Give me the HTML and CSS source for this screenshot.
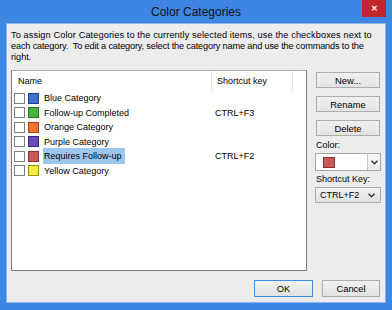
FILE: index.html
```html
<!DOCTYPE html>
<html lang="en">
<head>
    <meta charset="UTF-8">
    <title>Color Categories</title>
    <link rel="stylesheet" href="styles.css">
</head>
<body>
    <div class="window">
        <div class="titlebar">
            <span class="title">Color Categories</span>
            <div class="close">&#x2715;</div>
        </div>
        <div class="client">
            <p class="intro">
                <span class="line line-1">To assign Color Categories to the currently selected items, use the checkboxes next to</span>
                <span class="line line-2">each category.&nbsp; To edit a category, select the category name and use the commands to the</span>
                <span class="line">right.</span>
            </p>
            <div class="main">
                <div class="list">
                    <div class="list-head">
                        <div class="col-name">Name</div>
                        <div class="col-key">Shortcut key</div>
                        <div class="col-rest"></div>
                    </div>
                    <div class="row">
                        <div class="col-name"><span class="check"></span><span class="swatch" style="background:#3f6fd2;border-color:#243f8a"></span><span class="label">Blue Category</span></div>
                        <div class="col-key"></div>
                    </div>
                    <div class="row">
                        <div class="col-name"><span class="check"></span><span class="swatch" style="background:#4bb33f;border-color:#2a6e22"></span><span class="label">Follow-up Completed</span></div>
                        <div class="col-key">CTRL+F3</div>
                    </div>
                    <div class="row">
                        <div class="col-name"><span class="check"></span><span class="swatch" style="background:#ef7332;border-color:#9c4317"></span><span class="label">Orange Category</span></div>
                        <div class="col-key"></div>
                    </div>
                    <div class="row">
                        <div class="col-name"><span class="check"></span><span class="swatch" style="background:#6a4ab8;border-color:#3d2777"></span><span class="label">Purple Category</span></div>
                        <div class="col-key"></div>
                    </div>
                    <div class="row">
                        <div class="col-name"><span class="check"></span><span class="swatch" style="background:#c75a5a;border-color:#8a3030"></span><span class="label selected">Requires Follow-up</span></div>
                        <div class="col-key">CTRL+F2</div>
                    </div>
                    <div class="row">
                        <div class="col-name"><span class="check"></span><span class="swatch" style="background:#f5ec3a;border-color:#9a9010"></span><span class="label">Yellow Category</span></div>
                        <div class="col-key"></div>
                    </div>
                </div>
                <div class="side">
                    <button class="btn">New...</button>
                    <button class="btn">Rename</button>
                    <button class="btn">Delete</button>
                    <div class="field-label">Color:</div>
                    <div class="combo color-combo">
                        <span class="combo-value"><span class="color-box"></span></span>
                        <span class="combo-drop">
                            <svg width="7" height="5" viewBox="0 0 7 5"><polyline points="0.5,0.8 3.5,3.8 6.5,0.8" fill="none" stroke="#333" stroke-width="1.4"/></svg>
                        </span>
                    </div>
                    <div class="field-label">Shortcut Key:</div>
                    <div class="combo key-combo">
                        <span class="combo-value">CTRL+F2</span>
                        <svg width="7" height="5" viewBox="0 0 7 5"><polyline points="0.5,0.8 3.5,3.8 6.5,0.8" fill="none" stroke="#333" stroke-width="1.4"/></svg>
                    </div>
                </div>
            </div>
            <div class="footer">
                <button class="btn btn-ok">OK</button>
                <button class="btn btn-cancel">Cancel</button>
            </div>
        </div>
    </div>
</body>
</html>
```

FILE: styles.css
```css
body {
    margin: 0;
    font-family: "Liberation Sans", Arial, sans-serif;
    font-size: 9px;
    color: #000;
}
.window {
    width: 392px;
    height: 310px;
    box-sizing: border-box;
    background: #3d86e4;
    padding: 0 7px 8px 7px;
}
.titlebar {
    position: relative;
    height: 24px;
    display: flex;
    align-items: center;
    justify-content: center;
}
.title {
    font-size: 12px;
    color: #111;
}
.close {
    position: absolute;
    top: 0;
    right: -1px;
    width: 24px;
    height: 17px;
    background: #c1272d;
    color: #fff;
    font-size: 8px;
    font-weight: bold;
    display: flex;
    align-items: center;
    justify-content: center;
}
.client {
    height: 278px;
    box-sizing: border-box;
    background: #ececec;
    padding: 6px 5px 5px 4px;
    display: flex;
    flex-direction: column;
    box-shadow: 0 0 0 1px #8fb6ec;
}
.intro {
    margin: 0 -4px 7px 0;
    height: 33px;
    line-height: 11px;
    font-size: 9.2px;
}
.intro .line {
    display: block;
    white-space: nowrap;
}
.intro .line-1 {
    letter-spacing: 0.11px;
}
.intro .line-2 {
    letter-spacing: -0.17px;
}
.main {
    display: flex;
    gap: 9px;
    height: 201px;
}
.list {
    width: 296px;
    box-sizing: border-box;
    border: 1px solid #7d7d7d;
    border-top-color: #a8a8a8;
    background: #fff;
}
.list-head {
    display: flex;
    height: 20px;
    align-items: stretch;
}
.list-head > div {
    display: flex;
    align-items: center;
    border-right: 1px solid #e3e6ea;
}
.list-head .col-name {
    padding-left: 6px;
}
.list-head .col-key {
    padding-left: 5px;
}
.list-head .col-rest {
    flex: 1;
    border-right: none;
}
.col-name {
    width: 200px;
    box-sizing: border-box;
}
.col-key {
    width: 81px;
    box-sizing: border-box;
    padding-left: 3px;
}
.row {
    display: flex;
    height: 14.5px;
    align-items: center;
}
.row .col-name {
    display: flex;
    align-items: center;
    padding-left: 2px;
}
.check {
    width: 11px;
    height: 11px;
    box-sizing: border-box;
    border: 1px solid #7f7f7f;
    background: #fff;
}
.swatch {
    width: 11px;
    height: 11px;
    box-sizing: border-box;
    border: 1px solid;
    margin-left: 3px;
}
.label {
    margin-left: 4px;
    padding: 2px 2px 2px 1px;
    margin-right: -2px;
}
.label.selected {
    background: #9cc6ee;
    margin-left: 4px;
    padding: 3px 3px 3px 1px;
}
.side {
    width: 64px;
    display: flex;
    flex-direction: column;
    padding-top: 2px;
}
.btn {
    font-family: inherit;
    font-size: 9.4px;
    height: 16px;
    padding: 0;
    border: 1px solid #acacac;
    background: linear-gradient(#f0f0f0, #e3e3e3);
    color: #000;
}
.side .btn {
    margin-bottom: 8px;
}
.field-label {
    height: 11px;
    line-height: 11px;
    margin: -4px 0 2px 0;
}
.combo {
    display: flex;
    align-items: center;
    box-sizing: border-box;
    margin: 0 -1px 0 -1px;
}
.color-combo {
    height: 18px;
    border: 1px solid #a5a5a5;
    background: #fff;
    margin-bottom: 7px;
}
.color-combo .combo-value {
    flex: 1;
    display: flex;
    padding-left: 7px;
}
.color-box {
    width: 12px;
    height: 11px;
    box-sizing: border-box;
    background: #c75a5a;
    border: 1px solid #8a3030;
}
.combo-drop {
    width: 13px;
    height: 100%;
    box-sizing: border-box;
    border-left: 1px solid #c4c4c4;
    background: linear-gradient(#f6f6f6, #e9e9e9);
    display: flex;
    align-items: center;
    justify-content: center;
}
.key-combo {
    height: 16px;
    border: 1px solid #acacac;
    background: linear-gradient(#f0f0f0, #e3e3e3);
    padding: 0 5px 0 4px;
}
.key-combo .combo-value {
    flex: 1;
}
.footer {
    display: flex;
    justify-content: flex-end;
    gap: 9px;
    margin-top: 9px;
}
.footer .btn {
    height: 17px;
}
.btn-ok {
    width: 59px;
    border-color: #3c8ce0;
}
.btn-cancel {
    width: 58px;
}
```
